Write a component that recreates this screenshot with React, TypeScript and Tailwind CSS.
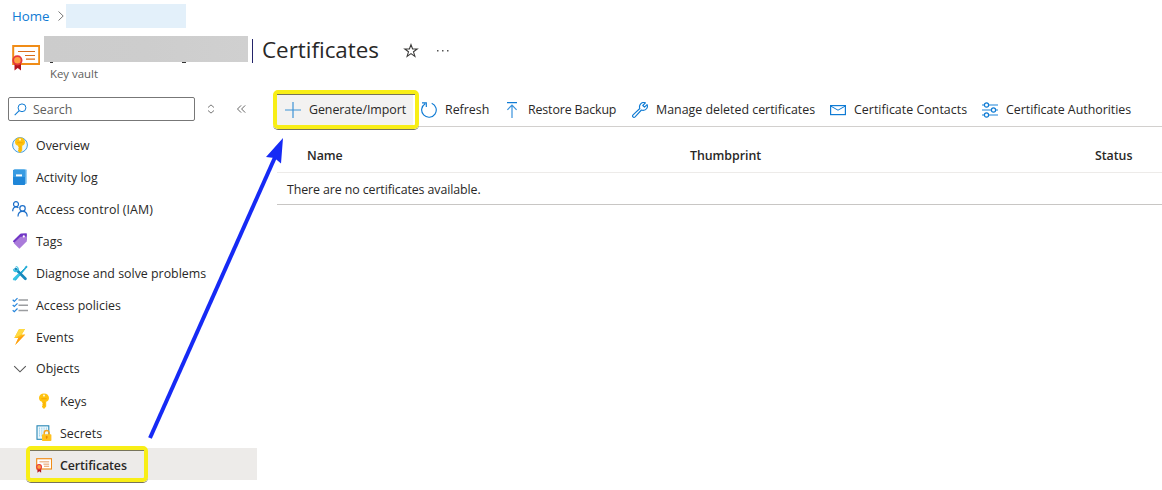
import type { ReactNode } from "react";

const Svg = ({ s = 16, vb = "0 0 16 16", children }: { s?: number; vb?: string; children: ReactNode }) => (
  <svg width={s} height={s} viewBox={vb} fill="none" className="block shrink-0">
    {children}
  </svg>
);

const KeyShape = () => (
  <>
    <path d="M8 .6C11.1.6 13 2.6 13 5C13 6.9 11.8 8.2 10.2 8.8V13.6L8 15.9L6 13.9V13L6.9 12.1L6 11.2L6.9 10.3L6 9.4V8.8C4.2 8.2 3 6.9 3 5C3 2.6 4.9.6 8 .6Z" fill="#ffc20e" />
    <circle cx="8" cy="2.6" r="1.1" fill="#fff3c4" />
    <path d="M5.3 5.3h5.4v.9H5.3zM7.6 8.7h.9v4.6h-.9z" fill="#f5a800" />
  </>
);

const CertificateIcon = ({ s = 16 }: { s?: number }) => (
  <Svg s={s} vb="0 0 28 28">
    <rect x="1.2" y="3" width="26" height="18" fill="#fff" stroke="#f08c17" strokeWidth="2" />
    <path d="M6 8.5h17M13 12.5h10M14 16.2h9" stroke="#d96c1b" strokeWidth="1.2" />
    <path d="M2.5 19h6.5v8.5L5.7 25L2.5 27.5z" fill="#b3151d" />
    <circle cx="5.4" cy="17.3" r="4.2" fill="#ff9f42" stroke="#e6373b" strokeWidth="1.8" />
  </Svg>
);

const OverviewIcon = () => (
  <Svg>
    <circle cx="8" cy="8" r="7.4" fill="#edf7fd" stroke="#3e9be0" strokeWidth="1" />
    <KeyShape />
  </Svg>
);

const LogIcon = () => (
  <Svg>
    <rect x="2" y=".2" width="12.8" height="14.8" rx="1" fill="#83c5f0" />
    <rect x="1" y=".8" width="12.2" height="15.2" rx="1" fill="#1f86d8" />
    <path d="M1 2a1.5 1.5 0 0 1 1.5-1.2h10a.8.8 0 0 1 .7.8V8H1z" fill="#389be2" />
    <rect x="4" y="5.4" width="6" height="2" fill="#fff" />
  </Svg>
);

const PeopleIcon = () => (
  <Svg>
    <g stroke="#1b6ec9" strokeWidth="1.2">
      <circle cx="4" cy="3.2" r="2.5" />
      <path d="M.7 10.2C.7 7.7 2 6 4 6c1 0 1.8.3 2.4.9" />
      <circle cx="10.5" cy="7.4" r="2.7" />
      <path d="M6 15.4c0-3 1.8-5.1 4.6-5.1s4.6 2.1 4.6 5.1" />
    </g>
  </Svg>
);

const TagIcon = () => (
  <Svg>
    <path d="M8.6.8L14.6.4V7.2L7.4 14.6L1 8.3z" fill="#6b39bd" />
    <path d="M8.2 3.6L14.6 2.6V8.6L7.4 15.8L1.6 10z" fill="#aa7bda" />
    <path d="M8.6.8L14.6.4V3.4L8.2 3.8L2.2 9.6L1 8.3z" fill="#7136c6" />
    <circle cx="11.8" cy="3.4" r="1.1" fill="#fff" />
  </Svg>
);

const ToolsIcon = () => (
  <Svg>
    <path d="M2 14.2L12.7 3.3L14.3 1L15.2 1.8L13.2 4L3.5 15.2z" fill="#27add8" stroke="#1eaad5" />
    <path d="M3.7 4L13.4 13.7" stroke="#1689bd" strokeWidth="2.8" strokeLinecap="round" />
    <path d="M3.3.9L5.6 3.1L5.1 5L3.1 5.6L.9 3.4C.7 5.6 2 7.4 4.3 7.2L6.8 5C7.3 2.7 5.5.7 3.3.9Z" fill="#37c1e2" />
    <path d="M2.1 14.2L6.5 9.8" stroke="#38c5e6" strokeWidth="2.5" strokeLinecap="round" />
  </Svg>
);

const PoliciesIcon = () => (
  <Svg>
    <path d="M6.5 3h9.5M6.5 8.3h9.5M6.5 13.5h9.5" stroke="#9b9da0" strokeWidth="1.4" />
    <path d="M.7 2.8L2.3 4.3L5.5 1.1M.7 8L2.3 9.5L5.5 6.3M.7 13.2L2.3 14.7L5.5 11.5" stroke="#2786dc" strokeWidth="1.2" />
  </Svg>
);

const BoltIcon = () => (
  <Svg>
    <path d="M7.1.1H13L9.7 5.6H13.2L3.2 16L6.3 8.9H2.3z" fill="#ffbd18" />
    <path d="M7.1.1H13L9.7 5.6L2.3 8.9z" fill="#ffda43" />
    <path d="M6.3 8.9L13.2 5.6L3.2 16z" fill="#ff9d12" />
  </Svg>
);

const SecretsIcon = () => (
  <Svg>
    <rect x="1" y=".8" width="11.8" height="13.5" fill="#eef8fc" stroke="#2787b5" strokeWidth="1.1" />
    <path d="M3.5 2.6v9M5.8 2.6v9M8.1 2.6v6M10.4 2.6v4" stroke="#8fcdec" strokeWidth="1" strokeDasharray="1.2 .7" />
    <path d="M8.2 10V8a2.5 2.5 0 0 1 5 0V10" stroke="#f7a31a" strokeWidth="1.4" />
    <rect x="6" y="9.2" width="9.4" height="6.8" rx=".8" fill="#ffc11f" />
    <circle cx="10.7" cy="12" r="1" fill="#e78900" />
    <path d="M10.3 12h.8v2h-.8z" fill="#e78900" />
  </Svg>
);

const ChevronIcon = () => (
  <Svg>
    <path d="M2.2 5.2L8 10.8L13.8 5.2" stroke="#555" strokeWidth="1.1" />
  </Svg>
);

const blue = "#0f7bd4";
const PlusIcon = () => (
  <Svg>
    <path d="M8 0V16M0 8H16" stroke="#3f93d6" strokeWidth="1.2" />
  </Svg>
);
const RefreshIcon = () => (
  <Svg>
    <path d="M10.7 1.2A7.3 7.3 0 1 1 4.2 1.7M1 .8H5.3V5" stroke={blue} strokeWidth="1.15" />
  </Svg>
);
const RestoreIcon = () => (
  <Svg>
    <path d="M3 .6H13" stroke={blue} strokeWidth="1.3" />
    <path d="M8 3.2V16M3.4 7.8L8 3.2L12.6 7.8" stroke="#3992dc" strokeWidth="1.2" />
  </Svg>
);
const WrenchIcon = () => (
  <Svg>
    <path d="M13.4.9L10.8 3.5L12.5 5.2L15.1 2.6C16.2 5.3 14.3 8.5 11 8.4C10.4 8.4 9.9 8.2 9.4 8L3.1 14.8C1.6 16.3-.4 14.3 1.1 12.8L7.8 6.5C6.6 3.5 9.5-.8 13.4.9Z" stroke={blue} strokeWidth="1.15" strokeLinejoin="round" />
  </Svg>
);
const MailIcon = () => (
  <Svg>
    <rect x=".6" y="3.6" width="14.8" height="9" stroke={blue} strokeWidth="1.2" />
    <path d="M.6 4L8 8.2L15.4 4" stroke={blue} />
  </Svg>
);
const SlidersIcon = () => (
  <Svg>
    <path d="M0 3H16M0 8H16M0 13H16" stroke="#68ade5" strokeWidth="1.6" />
    <g fill="#fff" stroke={blue} strokeWidth="1.2">
      <circle cx="4.5" cy="3" r="2.1" />
      <circle cx="11.5" cy="8" r="2.1" />
      <circle cx="4.5" cy="13" r="2.1" />
    </g>
  </Svg>
);

const navItems: { label: string; icon: ReactNode; row: string; text: string }[] = [
  { label: "Overview", icon: <OverviewIcon />, row: "pl-3", text: "pt-[2px]" },
  { label: "Activity log", icon: <LogIcon />, row: "pl-3", text: "pt-[2px]" },
  { label: "Access control (IAM)", icon: <PeopleIcon />, row: "pl-3", text: "pt-[2px] tracking-[0.06px]" },
  { label: "Tags", icon: <TagIcon />, row: "pl-3", text: "pt-[2px]" },
  { label: "Diagnose and solve problems", icon: <ToolsIcon />, row: "pl-3", text: "pt-[2px]" },
  { label: "Access policies", icon: <PoliciesIcon />, row: "pl-3", text: "pt-[2px]" },
  { label: "Events", icon: <BoltIcon />, row: "pl-3", text: "pt-[2px]" },
  { label: "Objects", icon: <ChevronIcon />, row: "pl-3", text: "" },
  { label: "Keys", icon: <Svg><KeyShape /></Svg>, row: "pl-9", text: "pt-[2px]" },
  { label: "Secrets", icon: <SecretsIcon />, row: "pl-9", text: "pt-[2px]" },
  { label: "Certificates", icon: <CertificateIcon />, row: "pl-9 bg-[#edebe9]", text: "pt-[2px] font-semibold tracking-[-0.1px]" },
];

const tools: { label: string; icon: ReactNode; cls: string }[] = [
  { label: "Generate/Import", icon: <PlusIcon />, cls: "w-[136px] bg-[#f3f2f1] pl-2 tracking-[-0.05px]" },
  { label: "Refresh", icon: <RefreshIcon />, cls: "w-[83px] pl-2" },
  { label: "Restore Backup", icon: <RestoreIcon />, cls: "w-[128px] pl-2 tracking-[-0.13px]" },
  { label: "Manage deleted certificates", icon: <WrenchIcon />, cls: "w-[198px] pl-2" },
  { label: "Certificate Contacts", icon: <MailIcon />, cls: "w-[152px] pl-2 tracking-[0.03px]" },
  { label: "Certificate Authorities", icon: <SlidersIcon />, cls: "w-[170px] pl-2 tracking-[-0.02px]" },
];

export default function App() {
  return (
    <div className="relative h-[490px] w-[1162px] overflow-hidden bg-white font-['Open_Sans','Noto_Sans',sans-serif] text-[12.4px] leading-4 text-[#292827]">
      <header className="flex h-[89px] flex-col">
        <div className="flex h-8 items-center pl-3">
          <span className="w-[45px] text-[13.3px] text-[#0f7bd4]">Home</span>
          <svg width="8" height="12" viewBox="0 0 8 12" fill="none">
            <path d="M1.5 1.5L6.2 6L1.5 10.5" stroke="#777" />
          </svg>
          <div className="ml-px h-6 w-[120px] bg-[#e3f0fa]" />
        </div>
        <div className="flex h-[57px] pl-3">
          <div className="mt-[11px] w-8">
            <CertificateIcon s={28} />
          </div>
          <div className="flex flex-col">
            <div className="flex h-[34px] items-center">
              <div className="relative h-[26px] w-[204px] bg-linear-to-r from-[#cccccc] via-[#cdcdcd] to-[#d0d0d0]">
                <span className="absolute top-[26px] left-[6px] h-px w-[3px] bg-[#333]" />
                <span className="absolute top-[26px] left-[138px] h-px w-[4px] bg-[#333]" />
              </div>
              <div className="mt-[3px] ml-[4px] h-[24px] w-px bg-[#24246a]" />
              <h1 className="ml-[9px] w-[141px] pt-[2px] text-[22.4px] leading-8 whitespace-nowrap text-[#292827]">Certificates</h1>
              <svg width="16" height="16" viewBox="0 0 16 16" fill="none" className="mt-[3px]">
                <path d="M8 1.7L9.6 6H14.2L10.5 8.8L11.9 13.4L8 10.6L4.1 13.4L5.5 8.8L1.8 6H6.4Z" stroke="#3b3a39" strokeWidth="1.1" />
              </svg>
              <svg width="12" height="4" viewBox="0 0 12 4" className="mt-[3px] ml-[18px]">
                <path d="M0 1h1.5v1.5H0zM5 1h1.5v1.5H5zM10 1h1.5v1.5H10z" fill="#555" />
              </svg>
            </div>
            <span className="pl-[6px] text-[11.4px] text-[#605e5c]">Key vault</span>
          </div>
        </div>
      </header>
      <div className="flex">
        <aside className="w-[257px] shrink-0">
          <div className="flex h-[39px] items-center pt-px pl-2">
            <div className="flex h-6 w-[187px] items-center rounded-xs border border-[#777] pl-[5px]">
              <svg width="13" height="13" viewBox="0 0 13 13" fill="none">
                <circle cx="8" cy="4.8" r="3.9" stroke={blue} />
                <path d="M5.2 7.6L.7 12.1" stroke={blue} strokeWidth="1.1" />
              </svg>
              <span className="ml-[6px] pt-[2px] text-[#605e5c]">Search</span>
            </div>
            <svg width="8" height="10" viewBox="0 0 8 10" fill="none" className="ml-[12px]">
              <path d="M1 3.5L4 .9L7 3.5M1 6.5L4 9.1L7 6.5" stroke="#777" />
            </svg>
            <svg width="9" height="8" viewBox="0 0 9 8" fill="none" className="ml-[22px]">
              <path d="M4.1.4L.5 4L4.1 7.6M8.2.4L4.6 4L8.2 7.6" stroke="#666" />
            </svg>
          </div>
          <nav>
            {navItems.map((n) => (
              <div key={n.label} className={`flex h-8 items-center gap-2 pt-[2px] ${n.row}`}>
                {n.icon}
                <span className={`whitespace-nowrap ${n.text}`}>{n.label}</span>
              </div>
            ))}
          </nav>
        </aside>
        <main className="ml-5 flex-1">
          <div className="flex h-[38px] border-b border-[#d2d0ce] pt-1">
            {tools.map((t) => (
              <div key={t.label} className={`flex h-[33px] shrink-0 items-center gap-2 ${t.cls}`}>
                {t.icon}
                <span className="whitespace-nowrap">{t.label}</span>
              </div>
            ))}
          </div>
          <div className="flex h-[46px] items-center border-b border-[#edebe9] pt-3 pl-[30px] font-semibold tracking-[-0.05px]">
            <span className="w-[383px]">Name</span>
            <span className="w-[405px]">Thumbprint</span>
            <span>Status</span>
          </div>
          <div className="flex h-8 items-center border-b border-[#c8c6c4] pt-[2px] pl-[10px] tracking-[-0.1px]">There are no certificates available.</div>
        </main>
      </div>
      <div className="absolute top-[90px] left-[273px] h-[40px] w-[146px] rounded-[5px] border-b border-[#77745a]">
        <div className="h-[39px] rounded-[5px] border-4 border-[#f8ee16]">
          <div className="border-t border-[#77745a]" />
        </div>
      </div>
      <div className="absolute top-[446px] left-[26px] h-[37px] w-[122px] rounded-[5px] border-b border-[#77745a]">
        <div className="h-[36px] rounded-[5px] border-4 border-[#f8ee16]">
          <div className="border-t border-[#77745a]" />
        </div>
      </div>
      <svg width="150" height="310" viewBox="0 0 150 310" className="absolute top-[134px] left-[140px]">
        <path d="M10 304L136 21" stroke="#162af5" strokeWidth="4" />
        <path d="M143 4L141 29.5L134.5 24L126 23Z" fill="#162af5" />
      </svg>
    </div>
  );
}
